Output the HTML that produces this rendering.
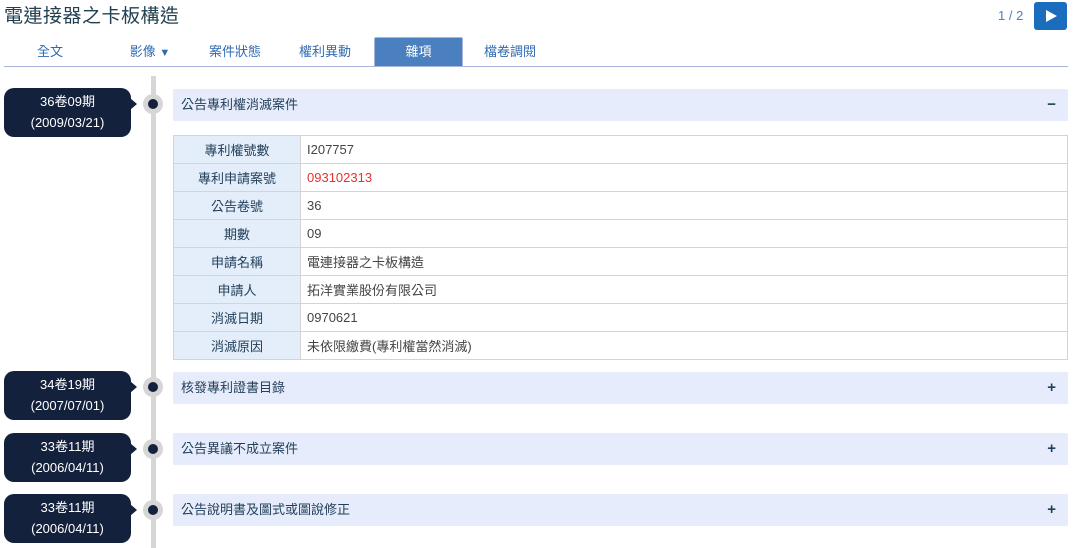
<!DOCTYPE html>
<html><head><meta charset="utf-8"><style>
body{margin:0;width:1080px;height:548px;background:#fff;position:relative;overflow:hidden;font-family:"Liberation Sans","Noto Sans CJK TC",sans-serif;}
.a{position:absolute}
.title{left:4px;top:1px;font-size:19px;color:#223f50;letter-spacing:0.5px}
.tab{top:38px;height:28px;line-height:28px;font-size:13px;color:#2f6bb0;text-align:center}
.bub{left:4px;width:127px;height:49px;background:#14213d;border-radius:10px;color:#fff;font-size:13px;text-align:center;line-height:21px;padding-top:3px;box-sizing:border-box}
.bub:after{content:"";position:absolute;right:-6px;top:10px;border-left:7px solid #14213d;border-top:6px solid transparent;border-bottom:6px solid transparent}
.dot{left:143px;width:20px;height:20px;border-radius:50%;background:#d6d6d6}
.dot:after{content:"";position:absolute;left:5px;top:5px;width:10px;height:10px;border-radius:50%;background:#14213d}
.hd{left:173px;width:895px;height:32px;background:#e6ecfb;border-radius:2px;font-size:13px;color:#23405a;line-height:32px;box-sizing:border-box;padding-left:8px}
.hd b{position:absolute;right:12px;top:0;font-size:15px;color:#23405a}
table{position:absolute;left:173px;top:135px;width:895px;border-collapse:collapse;font-size:13px}
td{border:1px solid #d4d4d4;height:27px;padding:0 0 0 6px;color:#444}
td.l{width:126px;background:#e3eefa;color:#23405a;text-align:center;padding:0}
</style></head><body>
<div class="a title">電連接器之卡板構造</div>
<div class="a" style="left:998px;top:8px;font-size:13px;color:#4a7fc0">1 / 2</div>
<div class="a" style="left:1034px;top:2px;width:33px;height:28px;background:#1a6dbd;border-radius:3px"><div class="a" style="left:12px;top:8px;border-left:11px solid #fff;border-top:6px solid transparent;border-bottom:6px solid transparent"></div></div>
<div class="a tab" style="left:20px;width:60px">全文</div>
<div class="a tab" style="left:120px;width:60px">影像 <span style="font-size:11px">▼</span></div>
<div class="a tab" style="left:200px;width:70px">案件狀態</div>
<div class="a tab" style="left:290px;width:70px">權利異動</div>
<div class="a tab" style="left:374px;top:37px;width:89px;height:29px;background:#4a7fc0;color:#fff;border:1px solid #a8b4dc;border-bottom:none;box-sizing:border-box;border-radius:2px 2px 0 0">雜項</div>
<div class="a tab" style="left:475px;width:70px">檔卷調閱</div>
<div class="a" style="left:4px;top:66px;width:1064px;height:1px;background:#a8b4dc"></div>
<div class="a" style="left:151px;top:76px;width:5px;height:472px;background:#d6d6d6"></div>

<div class="a bub" style="top:88px">36卷09期<br>(2009/03/21)</div>
<div class="a dot" style="top:94px"></div>
<div class="a hd" style="top:89px">公告專利權消滅案件<b>−</b></div>
<table>
<tr><td class="l">專利權號數</td><td>I207757</td></tr>
<tr><td class="l">專利申請案號</td><td style="color:#e8302e">093102313</td></tr>
<tr><td class="l">公告卷號</td><td>36</td></tr>
<tr><td class="l">期數</td><td>09</td></tr>
<tr><td class="l">申請名稱</td><td>電連接器之卡板構造</td></tr>
<tr><td class="l">申請人</td><td>拓洋實業股份有限公司</td></tr>
<tr><td class="l">消滅日期</td><td>0970621</td></tr>
<tr><td class="l">消滅原因</td><td>未依限繳費(專利權當然消滅)</td></tr>
</table>

<div class="a bub" style="top:371px">34卷19期<br>(2007/07/01)</div>
<div class="a dot" style="top:377px"></div>
<div class="a hd" style="top:372px">核發專利證書目錄<b>+</b></div>

<div class="a bub" style="top:433px">33卷11期<br>(2006/04/11)</div>
<div class="a dot" style="top:439px"></div>
<div class="a hd" style="top:433px">公告異議不成立案件<b>+</b></div>

<div class="a bub" style="top:494px">33卷11期<br>(2006/04/11)</div>
<div class="a dot" style="top:500px"></div>
<div class="a hd" style="top:494px">公告說明書及圖式或圖說修正<b>+</b></div>
</body></html>
